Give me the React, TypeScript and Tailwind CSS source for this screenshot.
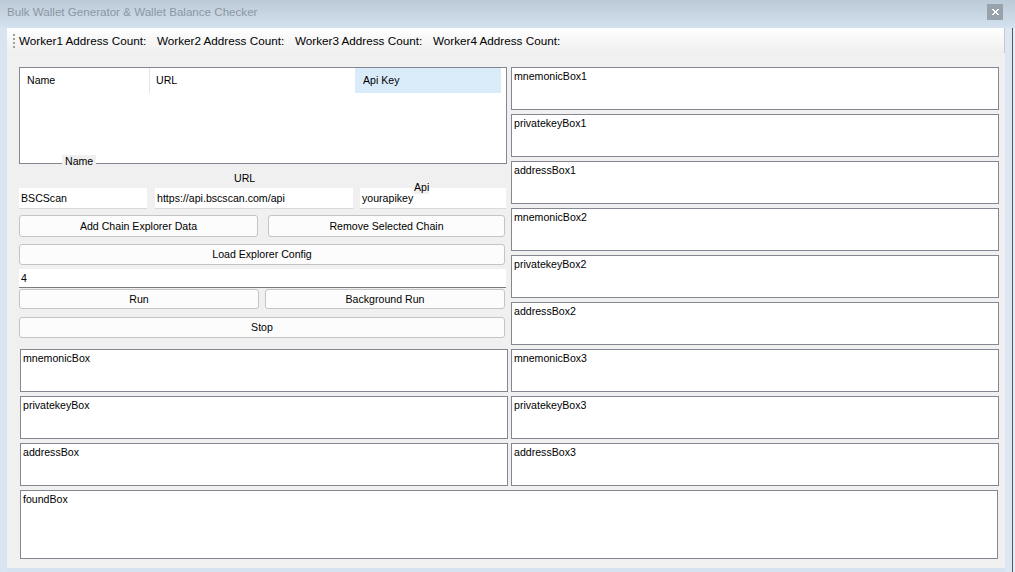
import React from "react";

const F11 = "text-[10.6px] leading-[13px] text-black";

function Btn({ w, h, label }: { w: string; h: string; label: string }) {
  return (
    <div
      className={`${w} ${h} flex items-center justify-center rounded-[3px] border border-[#c4c4c4] bg-[#fcfcfc] ${F11}`}
    >
      {label}
    </div>
  );
}

function TBox({ label, w, h, extra = "" }: { label: string; w: string; h: string; extra?: string }) {
  return (
    <div className={`${w} ${h} border border-[#828790] bg-white px-[2px] pt-[2px] ${F11} ${extra}`}>
      {label}
    </div>
  );
}

export default function App() {
  const rightBoxes = [
    "mnemonicBox1",
    "privatekeyBox1",
    "addressBox1",
    "mnemonicBox2",
    "privatekeyBox2",
    "addressBox2",
    "mnemonicBox3",
    "privatekeyBox3",
    "addressBox3",
  ];
  return (
    <div
      className="w-[1015px] h-[572px] flex flex-col bg-[#d6e2f0] overflow-hidden"
      style={{ fontFamily: '"Liberation Sans", Arial, sans-serif' }}
    >
      {/* title bar */}
      <div className="h-[28px] flex items-center bg-gradient-to-b from-[#bccad8] to-[#d4e1ee] pl-[7px] pr-[12px]">
        <div className="text-[11.6px] text-[#8a97a3] flex-1 pb-[4px]">
          Bulk Wallet Generator &amp; Wallet Balance Checker
        </div>
        <div className="w-[16px] h-[16px] bg-[#98a2ac] flex items-center justify-center mb-[4px]">
          <svg width="7" height="6" viewBox="0 0 7 6">
            <path d="M0 0h2v1h1v1h1V1h1V0h2v1H6v1H5v2h1v1h1v1H5V5H4V4H3v1H2v1H0V5h1V4h1V2H1V1H0z" fill="#fff" />
          </svg>
        </div>
      </div>
      <div className="flex-1 flex">
        {/* left border */}
        <div className="w-[7px] bg-[#d9e4f1]" />
        {/* client */}
        <div className="w-[998px] h-[540px] bg-[#f0f0f0] flex flex-col">
          {/* toolstrip */}
          <div className="h-[25px] flex items-center bg-gradient-to-b from-[#ffffff] to-[#efefef] border-r border-[#c8c8c8]">
            <div className="w-[12px] h-full flex flex-col items-center justify-center gap-[2px] pl-[1px]">
              {[0, 1, 2, 3].map((i) => (
                <div key={i} className="w-[2px] h-[2px] bg-[#a0a0a0]" />
              ))}
            </div>
            {[1, 2, 3, 4].map((n) => (
              <div key={n} className="w-[138px] text-[11.7px] text-black whitespace-nowrap">
                Worker{n} Address Count:
              </div>
            ))}
          </div>
          {/* content */}
          <div className="pl-[12px] pt-[14px] flex flex-col">
            <div className="flex gap-[3px]">
              {/* left column */}
              <div className="w-[489px] flex flex-col">
                {/* list view */}
                <div className="relative w-[488px] h-[97px] border border-[#828790] bg-white">
                  <div className="flex h-[25px] items-center">
                    <div className={`w-[130px] pl-[7px] h-full flex items-center border-r border-[#e5e5e5] ${F11}`}>
                      Name
                    </div>
                    <div className={`w-[205px] pl-[6px] h-full flex items-center ${F11}`}>URL</div>
                    <div className={`w-[146px] pl-[8px] h-full flex items-center bg-[#d9ebf9] ${F11}`}>
                      Api Key
                    </div>
                  </div>
                  <div className={`absolute left-[42px] bottom-[-5px] bg-[#f0f0f0] px-[3px] ${F11}`}>Name</div>
                </div>
                {/* labels */}
                <div className="relative h-[24px]">
                  <div className={`absolute left-[215px] top-[8px] ${F11}`}>URL</div>
                  <div className={`absolute left-[395px] top-[17px] z-10 bg-[#f0f0f0] ${F11}`}>Api</div>
                </div>
                {/* text inputs */}
                <div className="flex h-[21px]">
                  <div className={`w-[128px] bg-white border-b border-[#dadada] px-[2px] flex items-center ${F11}`}>
                    BSCScan
                  </div>
                  <div
                    className={`ml-[8px] w-[198px] bg-white border-b border-[#dadada] px-[2px] flex items-center ${F11}`}
                  >
                    https://api.bscscan.com/api
                  </div>
                  <div
                    className={`ml-[7px] w-[146px] bg-white border-b border-[#dadada] px-[2px] flex items-center ${F11}`}
                  >
                    yourapikey
                  </div>
                </div>
                <div className="flex mt-[6px] gap-[10px]">
                  <Btn w="w-[239px]" h="h-[22px]" label="Add Chain Explorer Data" />
                  <Btn w="w-[237px]" h="h-[22px]" label="Remove Selected Chain" />
                </div>
                <div className="mt-[7px]">
                  <Btn w="w-[486px]" h="h-[21px]" label="Load Explorer Config" />
                </div>
                <div
                  className={`mt-[4px] w-[487px] h-[19px] bg-white border-b border-[#7a7a7a] px-[2px] flex items-center ${F11}`}
                >
                  4
                </div>
                <div className="flex mt-[1px] gap-[6px]">
                  <Btn w="w-[240px]" h="h-[20px]" label="Run" />
                  <Btn w="w-[240px]" h="h-[20px]" label="Background Run" />
                </div>
                <div className="mt-[8px]">
                  <Btn w="w-[486px]" h="h-[21px]" label="Stop" />
                </div>
                <div className="mt-[11px] flex flex-col gap-[4px] pl-[1px]">
                  <TBox label="mnemonicBox" w="w-[488px]" h="h-[43px]" />
                  <TBox label="privatekeyBox" w="w-[488px]" h="h-[43px]" />
                  <TBox label="addressBox" w="w-[488px]" h="h-[43px]" />
                </div>
              </div>
              {/* right column */}
              <div className="w-[488px] flex flex-col gap-[4px]">
                {rightBoxes.map((b) => (
                  <TBox key={b} label={b} w="w-[488px]" h="h-[43px]" />
                ))}
              </div>
            </div>
            <div className="mt-[4px] pl-[1px]">
              <TBox label="foundBox" w="w-[978px]" h="h-[69px]" />
            </div>
          </div>
        </div>
        {/* right border */}
        <div className="w-[7px] bg-[#dde7f3]" />
        <div className="w-[1px] bg-[#505860]" />
        <div className="w-[2px] bg-[#e6edf5]" />
      </div>
    </div>
  );
}
